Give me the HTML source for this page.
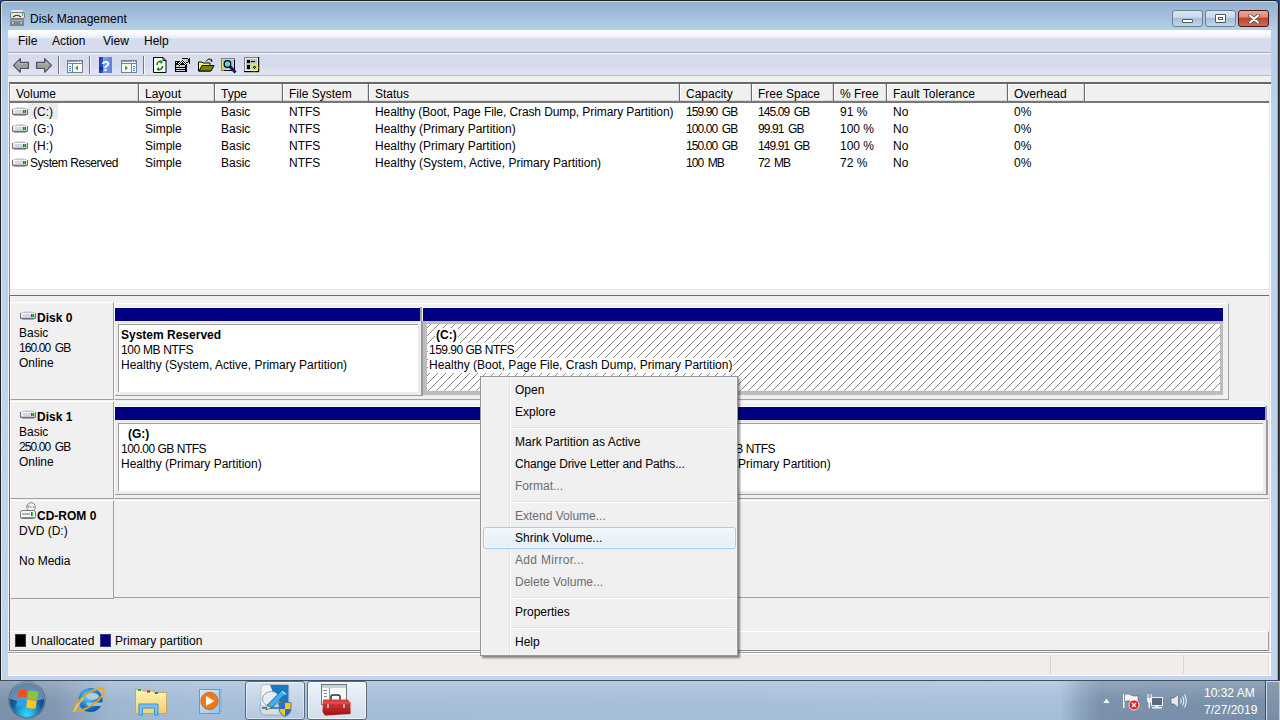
<!DOCTYPE html>
<html><head><meta charset="utf-8"><style>
*{margin:0;padding:0;box-sizing:border-box}
html,body{width:1280px;height:720px;overflow:hidden;background:#1652a8;font-family:"Liberation Sans",sans-serif;font-size:12px;color:#000;line-height:14px}
.a{position:absolute}
.t{position:absolute;white-space:nowrap}
.n{letter-spacing:-0.9px;word-spacing:2px}
.hd{position:absolute;top:0;height:19px;background:#f0f0f0;border-bottom:2px solid #777;border-right:1px solid #6d6d6d;box-shadow:inset -1px -1px 0 #d9d9d9,inset 1px 1px 0 #fff}
.hd span{position:absolute;left:6px;top:3px;white-space:nowrap}
</style></head><body>
<svg width="0" height="0" style="position:absolute"><defs>
<linearGradient id="dg" x1="0" y1="0" x2="0" y2="1"><stop offset="0" stop-color="#f4f4f4"/><stop offset=".45" stop-color="#d8dde3"/><stop offset="1" stop-color="#9aa0a6"/></linearGradient>
<pattern id="chk" width="2" height="2" patternUnits="userSpaceOnUse"><rect width="2" height="2" fill="#fff"/><rect width="1" height="1" fill="#000"/><rect x="1" y="1" width="1" height="1" fill="#000"/></pattern>
<pattern id="hatch" x="0" y="4" width="8" height="8" patternUnits="userSpaceOnUse"><rect x="0" y="7" width="1" height="1" fill="#8c8c8c"/><rect x="1" y="6" width="1" height="1" fill="#8c8c8c"/><rect x="2" y="5" width="1" height="1" fill="#8c8c8c"/><rect x="3" y="4" width="1" height="1" fill="#8c8c8c"/><rect x="4" y="3" width="1" height="1" fill="#8c8c8c"/><rect x="5" y="2" width="1" height="1" fill="#8c8c8c"/><rect x="6" y="1" width="1" height="1" fill="#8c8c8c"/><rect x="7" y="0" width="1" height="1" fill="#8c8c8c"/></pattern>
</defs></svg>
<div class="a" style="left:0px;top:0px;width:1279px;height:681px;background:linear-gradient(#93afd0 0px,#b6d0ea 30px,#bad2ea 120px,#c0d6ec 680px);border:1px solid #202020;border-radius:4px 4px 0 0;box-shadow:inset 1px 1px 0 rgba(255,255,255,.55)"></div>
<span class="t" style="left:30px;top:12px;">Disk Management</span>
<div class="a" style="left:1172px;top:10px;width:31px;height:17px;border:1px solid #6a7f98;border-radius:3px;background:linear-gradient(#dbe6f3 0,#c5d6ea 45%,#a8bdd6 50%,#c2d5ea 100%)"><div class="a" style="left:9px;top:8px;width:11px;height:4px;background:#fff;border:1px solid #505860;border-radius:1px"></div></div>
<div class="a" style="left:1205px;top:10px;width:31px;height:17px;border:1px solid #6a7f98;border-radius:3px;background:linear-gradient(#dbe6f3 0,#c5d6ea 45%,#a8bdd6 50%,#c2d5ea 100%)"><div class="a" style="left:9px;top:3px;width:11px;height:9px;background:#fff;border:1px solid #505860;border-radius:1px"><div class="a" style="left:2px;top:2px;width:5px;height:3px;border:1px solid #505860"></div></div></div>
<div class="a" style="left:1238px;top:10px;width:31px;height:17px;border:1px solid #4b1516;border-radius:3px;background:linear-gradient(#eaa99a 0,#dd8a76 40%,#c0432a 50%,#d26b55 100%)"><svg class="a" style="left:9px;top:3px" width="12" height="10" viewBox="0 0 12 10"><path d="M2 1.5 L10 8.5 M10 1.5 L2 8.5" stroke="#4a4a4a" stroke-width="3.6" stroke-linecap="round"/><path d="M2 1.5 L10 8.5 M10 1.5 L2 8.5" stroke="#fff" stroke-width="2.2" stroke-linecap="round"/></svg></div>
<div class="a" style="left:8px;top:30px;width:1263px;height:646px;background:#f0f0f0"></div>
<div class="a" style="left:8px;top:30px;width:1263px;height:23px;background:linear-gradient(#ffffff 0,#f4f6fb 5px,#e6eaf4 8px,#d6dcee 9px,#d6dcee 22px);border-bottom:1px solid #a4a8b0"></div>
<span class="t" style="left:18px;top:34px;">File</span>
<span class="t" style="left:52px;top:34px;">Action</span>
<span class="t" style="left:103px;top:34px;">View</span>
<span class="t" style="left:144px;top:34px;">Help</span>
<div class="a" style="left:8px;top:53px;width:1263px;height:23px;background:linear-gradient(#fafbfe 0,#fafbfe 1px,#d6dcee 1px,#d6dcee 15px,#dce2f2 16px,#dde3f3 22px);border-bottom:1px solid #b4bccf"></div>
<svg class="a" style="left:0;top:0" width="270" height="80" viewBox="0 0 270 80" shape-rendering="geometricPrecision">
<defs>
<linearGradient id="arr" x1="0" y1="0" x2="0" y2="1"><stop offset="0" stop-color="#e6e6e6"/><stop offset=".5" stop-color="#9b9b9b"/><stop offset="1" stop-color="#c9c9c9"/></linearGradient>
<linearGradient id="hlp" x1="0" y1="0" x2="1" y2="0"><stop offset="0" stop-color="#1c3da8"/><stop offset=".3" stop-color="#2c52c0"/><stop offset=".31" stop-color="#7fa2e8"/><stop offset="1" stop-color="#5c80dc"/></linearGradient>
</defs>
<path d="M13.5 65.4 L20.3 58.6 L20.3 62.4 L28.4 62.4 L28.4 68.4 L20.3 68.4 L20.3 72.2 Z" fill="url(#arr)" stroke="#555" stroke-width="1.3" stroke-linejoin="round"/>
<path d="M51.5 65.4 L44.7 58.6 L44.7 62.4 L36.6 62.4 L36.6 68.4 L44.7 68.4 L44.7 72.2 Z" fill="url(#arr)" stroke="#555" stroke-width="1.3" stroke-linejoin="round"/>
<rect x="58" y="56" width="1" height="18" fill="#6f7680"/><rect x="59" y="56" width="1" height="18" fill="#f4f6fb"/>
<rect x="89" y="56" width="1" height="18" fill="#6f7680"/><rect x="90" y="56" width="1" height="18" fill="#f4f6fb"/>
<rect x="143" y="56" width="1" height="18" fill="#6f7680"/><rect x="144" y="56" width="1" height="18" fill="#f4f6fb"/>
<!-- tree icon -->
<rect x="67.5" y="60.5" width="15" height="12" fill="#f6f6f6" stroke="#7b8089"/>
<rect x="68" y="61" width="10" height="1" fill="#9aa0a8"/><rect x="79" y="61" width="1" height="1" fill="#7b8089"/><rect x="81" y="61" width="1" height="1" fill="#7b8089"/>
<rect x="68" y="63" width="14" height="1" fill="#7b8089"/>
<rect x="72" y="64" width="1" height="8" fill="#7b8089"/>
<rect x="69" y="66" width="2" height="1" fill="#3a88c8"/><rect x="69" y="68" width="2" height="1" fill="#3a88c8"/><rect x="69" y="70" width="2" height="1" fill="#3a88c8"/>
<path d="M75 68 L78 65.5 L78 70.5 Z" fill="#22b422"/>
<!-- help -->
<rect x="99" y="57" width="13" height="16" fill="url(#hlp)"/>
<rect x="99" y="67" width="4" height="3" fill="#162f80"/>
<text x="105.6" y="70.5" font-family="Liberation Sans" font-weight="bold" font-size="14" fill="#fff" text-anchor="middle">?</text>
<!-- action pane icon -->
<rect x="121.5" y="60.5" width="15" height="12" fill="#f6f6f6" stroke="#7b8089"/>
<rect x="122" y="61" width="10" height="1" fill="#9aa0a8"/><rect x="133" y="61" width="1" height="1" fill="#7b8089"/><rect x="135" y="61" width="1" height="1" fill="#7b8089"/>
<rect x="122" y="63" width="14" height="1" fill="#7b8089"/>
<rect x="131" y="64" width="1" height="8" fill="#7b8089"/>
<rect x="133" y="66" width="2" height="1" fill="#3a88c8"/><rect x="133" y="68" width="2" height="1" fill="#3a88c8"/><rect x="133" y="70" width="2" height="1" fill="#3a88c8"/>
<path d="M128 68 L125 65.5 L125 70.5 Z" fill="#22b422"/>
<!-- refresh page -->
<path d="M153.5 57.5 L163 57.5 L166 60.5 L166 72.5 L153.5 72.5 Z" fill="#fff" stroke="#000" stroke-width="1"/>
<path d="M163 57.5 L163 60.5 L166 60.5" fill="none" stroke="#000" stroke-width="1"/>
<path d="M157 65 A3.2 3.2 0 0 1 162 62" fill="none" stroke="#0a8a0a" stroke-width="1.6"/>
<path d="M160.5 60 L163 62.2 L160.5 64 Z" fill="#0a8a0a"/>
<path d="M162.5 66 A3.2 3.2 0 0 1 157.5 69" fill="none" stroke="#0a8a0a" stroke-width="1.6"/>
<path d="M159 67 L156.5 69 L159 71 Z" fill="#0a8a0a"/>
<!-- properties -->
<g shape-rendering="crispEdges">
<rect x="175" y="61" width="12" height="11" fill="#000"/>
<rect x="176" y="62" width="1" height="1" fill="#e0e0e0"/>
<rect x="176" y="65" width="9" height="2" fill="#c8c8c8"/>
<rect x="176" y="68" width="9" height="1" fill="#d8d8d8"/>
<rect x="176" y="70" width="9" height="1" fill="#d8d8d8"/>
<rect x="182" y="58" width="6" height="5" fill="#000"/>
<rect x="183" y="59" width="5" height="3" fill="#c8c8c8"/>
<rect x="188" y="59" width="1" height="3" fill="#000"/>
<rect x="189" y="58" width="1" height="6" fill="#1010c0"/>
<path d="M177 64 L182 59 L183 59 L187 64 L185 66 L182 63 L179 66 Z" fill="url(#chk)"/>
</g>
<!-- open folder -->
<path d="M198.5 62 L202 62 L203 63 L210 63 L210 71 L198.5 71 Z" fill="#ffff40" stroke="#000"/>
<path d="M199 71 L202 65.5 L214 65.5 L211 71 Z" fill="#808000" stroke="#000"/>
<path d="M206 61.5 Q209 57 212 60.5" fill="none" stroke="#000" stroke-width="1"/>
<path d="M211 59 L213 61.5 L210.5 61.5 Z" fill="#000"/>
<!-- search -->
<rect x="221.5" y="58.5" width="13" height="12" fill="#c0c0c0" stroke="#808080"/>
<rect x="222.5" y="59.5" width="11" height="10" fill="none" stroke="#ffff00" stroke-dasharray="1 1"/>
<rect x="224" y="70" width="11" height="1" fill="#000"/><rect x="234" y="60" width="1" height="10" fill="#000"/>
<circle cx="227.5" cy="64" r="3.3" fill="#40e0f0" stroke="#000" stroke-width="1.2"/>
<path d="M230 66.5 L235.5 72.5" stroke="#000" stroke-width="2.6"/>
<path d="M230.5 67 L235 72" stroke="#1a1ae0" stroke-width="1.3"/>
<!-- settings -->
<rect x="244.5" y="57.5" width="14" height="14" fill="#f0f0f0" stroke="#808080"/>
<rect x="244" y="71" width="15" height="1.2" fill="#000"/><rect x="258" y="57" width="1.2" height="15" fill="#000"/>
<rect x="246" y="59" width="11" height="11" fill="#c0c0c0"/>
<rect x="247" y="60" width="3" height="3" fill="#000"/><rect x="251" y="61" width="4" height="1" fill="#000"/>
<rect x="247" y="65" width="3" height="4" fill="#000"/>
<g transform="translate(254.5 67.5)"><circle r="3.2" fill="none" stroke="#ffff00" stroke-width="1.6" stroke-dasharray="1.5 1"/><circle r="1.4" fill="#000"/></g>
<path d="M251 64 L258 71 M258 64 L251 71" stroke="#ffff00" stroke-width="1" stroke-dasharray="1 1"/>
</svg>
<svg class="a" style="left:10px;top:10px" width="15" height="16" viewBox="0 0 15 16">
<rect x="1" y="0" width="12" height="3" rx="1.5" fill="#e8e8e8"/>
<rect x="0.5" y="2.5" width="14" height="6" rx="1.5" fill="#eaeaea" stroke="#7b7b7b"/>
<path d="M3 7 Q7 3.5 11 7" fill="none" stroke="#333" stroke-width="1.2"/>
<rect x="12" y="3" width="1.2" height="3" fill="#3ccc3c"/>
<rect x="0" y="9" width="14" height="7" fill="#7d8590"/>
<rect x="1" y="10" width="12" height="1" fill="#aab2bc"/>
<rect x="2" y="12" width="1.5" height="1.5" fill="#e6e6e6"/><rect x="10.5" y="12" width="1.5" height="1.5" fill="#e6e6e6"/>
</svg>
<div class="a" style="left:9px;top:82px;width:1262px;height:209px;background:#fff;border-top:2px solid #696969;border-left:1px solid #8c8c8c">
<div class="hd" style="left:0px;width:129px;"><span>Volume</span></div>
<div class="hd" style="left:129px;width:76px;"><span>Layout</span></div>
<div class="hd" style="left:205px;width:68px;"><span>Type</span></div>
<div class="hd" style="left:273px;width:86px;"><span>File System</span></div>
<div class="hd" style="left:359px;width:311px;"><span>Status</span></div>
<div class="hd" style="left:670px;width:72px;"><span>Capacity</span></div>
<div class="hd" style="left:742px;width:82px;"><span>Free Space</span></div>
<div class="hd" style="left:824px;width:53px;"><span>% Free</span></div>
<div class="hd" style="left:877px;width:121px;"><span>Fault Tolerance</span></div>
<div class="hd" style="left:998px;width:77px;"><span>Overhead</span></div>
<div class="hd" style="left:1075px;width:186px;border-right:none;box-shadow:inset 1px 1px 0 #fff"><span></span></div>
<div class="a" style="left:0;top:18px;width:1262px;height:17px">
<div class="a" style="left:18px;top:1px;width:30px;height:16px;background:#ececec"></div>
<svg class="a" style="left:2px;top:5px" width="16" height="9" viewBox="0 0 16 9" shape-rendering="crispEdges"><rect x="4" y="0" width="8" height="1" fill="#dedede"/><rect x="2" y="1" width="12" height="1" fill="#c4c4c4"/><rect x="1" y="1" width="1" height="1" fill="#dcdcdc"/><rect x="14" y="1" width="1" height="1" fill="#dcdcdc"/><rect x="0" y="2" width="1" height="5" fill="#6c6c72"/><rect x="15" y="2" width="1" height="5" fill="#6c6c72"/><rect x="1" y="2" width="14" height="1" fill="#f6f6f6"/><rect x="1" y="3" width="2" height="3" fill="#eeeeee"/><rect x="3" y="3" width="8" height="3" fill="#d3d7e6"/><rect x="11" y="3" width="1" height="3" fill="#50507a"/><rect x="12" y="3" width="1" height="3" fill="#38c838"/><rect x="13" y="3" width="1" height="3" fill="#50507a"/><rect x="14" y="3" width="1" height="3" fill="#dcdcdc"/><rect x="1" y="6" width="14" height="1" fill="#c8c8c8"/><rect x="1" y="7" width="14" height="1" fill="#757579"/><rect x="0" y="7" width="1" height="1" fill="#9a9a9a"/><rect x="15" y="7" width="1" height="1" fill="#9a9a9a"/><rect x="2" y="8" width="12" height="1" fill="#a8a8a8"/></svg>
<span class="t" style="left:23px;top:3px;">(C:)</span>
<span class="t" style="left:135px;top:3px;">Simple</span>
<span class="t" style="left:211px;top:3px;">Basic</span>
<span class="t" style="left:279px;top:3px;">NTFS</span>
<span class="t" style="left:365px;top:3px;letter-spacing:-0.09px;">Healthy (Boot, Page File, Crash Dump, Primary Partition)</span>
<span class="t n" style="left:676px;top:3px;">159.90 GB</span>
<span class="t n" style="left:748px;top:3px;">145.09 GB</span>
<span class="t" style="left:830px;top:3px;">91 %</span>
<span class="t" style="left:883px;top:3px;">No</span>
<span class="t" style="left:1004px;top:3px;">0%</span>
</div>
<div class="a" style="left:0;top:35px;width:1262px;height:17px">
<svg class="a" style="left:2px;top:5px" width="16" height="9" viewBox="0 0 16 9" shape-rendering="crispEdges"><rect x="4" y="0" width="8" height="1" fill="#dedede"/><rect x="2" y="1" width="12" height="1" fill="#c4c4c4"/><rect x="1" y="1" width="1" height="1" fill="#dcdcdc"/><rect x="14" y="1" width="1" height="1" fill="#dcdcdc"/><rect x="0" y="2" width="1" height="5" fill="#6c6c72"/><rect x="15" y="2" width="1" height="5" fill="#6c6c72"/><rect x="1" y="2" width="14" height="1" fill="#f6f6f6"/><rect x="1" y="3" width="2" height="3" fill="#eeeeee"/><rect x="3" y="3" width="8" height="3" fill="#d3d7e6"/><rect x="11" y="3" width="1" height="3" fill="#50507a"/><rect x="12" y="3" width="1" height="3" fill="#38c838"/><rect x="13" y="3" width="1" height="3" fill="#50507a"/><rect x="14" y="3" width="1" height="3" fill="#dcdcdc"/><rect x="1" y="6" width="14" height="1" fill="#c8c8c8"/><rect x="1" y="7" width="14" height="1" fill="#757579"/><rect x="0" y="7" width="1" height="1" fill="#9a9a9a"/><rect x="15" y="7" width="1" height="1" fill="#9a9a9a"/><rect x="2" y="8" width="12" height="1" fill="#a8a8a8"/></svg>
<span class="t" style="left:23px;top:3px;">(G:)</span>
<span class="t" style="left:135px;top:3px;">Simple</span>
<span class="t" style="left:211px;top:3px;">Basic</span>
<span class="t" style="left:279px;top:3px;">NTFS</span>
<span class="t" style="left:365px;top:3px;">Healthy (Primary Partition)</span>
<span class="t n" style="left:676px;top:3px;">100.00 GB</span>
<span class="t n" style="left:748px;top:3px;">99.91 GB</span>
<span class="t" style="left:830px;top:3px;">100 %</span>
<span class="t" style="left:883px;top:3px;">No</span>
<span class="t" style="left:1004px;top:3px;">0%</span>
</div>
<div class="a" style="left:0;top:52px;width:1262px;height:17px">
<svg class="a" style="left:2px;top:5px" width="16" height="9" viewBox="0 0 16 9" shape-rendering="crispEdges"><rect x="4" y="0" width="8" height="1" fill="#dedede"/><rect x="2" y="1" width="12" height="1" fill="#c4c4c4"/><rect x="1" y="1" width="1" height="1" fill="#dcdcdc"/><rect x="14" y="1" width="1" height="1" fill="#dcdcdc"/><rect x="0" y="2" width="1" height="5" fill="#6c6c72"/><rect x="15" y="2" width="1" height="5" fill="#6c6c72"/><rect x="1" y="2" width="14" height="1" fill="#f6f6f6"/><rect x="1" y="3" width="2" height="3" fill="#eeeeee"/><rect x="3" y="3" width="8" height="3" fill="#d3d7e6"/><rect x="11" y="3" width="1" height="3" fill="#50507a"/><rect x="12" y="3" width="1" height="3" fill="#38c838"/><rect x="13" y="3" width="1" height="3" fill="#50507a"/><rect x="14" y="3" width="1" height="3" fill="#dcdcdc"/><rect x="1" y="6" width="14" height="1" fill="#c8c8c8"/><rect x="1" y="7" width="14" height="1" fill="#757579"/><rect x="0" y="7" width="1" height="1" fill="#9a9a9a"/><rect x="15" y="7" width="1" height="1" fill="#9a9a9a"/><rect x="2" y="8" width="12" height="1" fill="#a8a8a8"/></svg>
<span class="t" style="left:23px;top:3px;">(H:)</span>
<span class="t" style="left:135px;top:3px;">Simple</span>
<span class="t" style="left:211px;top:3px;">Basic</span>
<span class="t" style="left:279px;top:3px;">NTFS</span>
<span class="t" style="left:365px;top:3px;">Healthy (Primary Partition)</span>
<span class="t n" style="left:676px;top:3px;">150.00 GB</span>
<span class="t n" style="left:748px;top:3px;">149.91 GB</span>
<span class="t" style="left:830px;top:3px;">100 %</span>
<span class="t" style="left:883px;top:3px;">No</span>
<span class="t" style="left:1004px;top:3px;">0%</span>
</div>
<div class="a" style="left:0;top:69px;width:1262px;height:17px">
<svg class="a" style="left:2px;top:5px" width="16" height="9" viewBox="0 0 16 9" shape-rendering="crispEdges"><rect x="4" y="0" width="8" height="1" fill="#dedede"/><rect x="2" y="1" width="12" height="1" fill="#c4c4c4"/><rect x="1" y="1" width="1" height="1" fill="#dcdcdc"/><rect x="14" y="1" width="1" height="1" fill="#dcdcdc"/><rect x="0" y="2" width="1" height="5" fill="#6c6c72"/><rect x="15" y="2" width="1" height="5" fill="#6c6c72"/><rect x="1" y="2" width="14" height="1" fill="#f6f6f6"/><rect x="1" y="3" width="2" height="3" fill="#eeeeee"/><rect x="3" y="3" width="8" height="3" fill="#d3d7e6"/><rect x="11" y="3" width="1" height="3" fill="#50507a"/><rect x="12" y="3" width="1" height="3" fill="#38c838"/><rect x="13" y="3" width="1" height="3" fill="#50507a"/><rect x="14" y="3" width="1" height="3" fill="#dcdcdc"/><rect x="1" y="6" width="14" height="1" fill="#c8c8c8"/><rect x="1" y="7" width="14" height="1" fill="#757579"/><rect x="0" y="7" width="1" height="1" fill="#9a9a9a"/><rect x="15" y="7" width="1" height="1" fill="#9a9a9a"/><rect x="2" y="8" width="12" height="1" fill="#a8a8a8"/></svg>
<span class="t" style="left:20px;top:3px;letter-spacing:-0.45px;">System Reserved</span>
<span class="t" style="left:135px;top:3px;">Simple</span>
<span class="t" style="left:211px;top:3px;">Basic</span>
<span class="t" style="left:279px;top:3px;">NTFS</span>
<span class="t" style="left:365px;top:3px;">Healthy (System, Active, Primary Partition)</span>
<span class="t n" style="left:676px;top:3px;">100 MB</span>
<span class="t n" style="left:748px;top:3px;">72 MB</span>
<span class="t" style="left:830px;top:3px;">72 %</span>
<span class="t" style="left:883px;top:3px;">No</span>
<span class="t" style="left:1004px;top:3px;">0%</span>
</div>
</div>
<div class="a" style="left:9px;top:295px;width:1262px;height:356px;background:#f0f0f0;border-top:1px solid #6d6d6d;border-left:1px solid #6d6d6d"></div>
<div class="a" style="left:10px;top:289px;width:1261px;height:1px;background:#e3e3e3"></div>
<div class="a" style="left:10px;top:290px;width:1261px;height:5px;background:#f2f2f2;border-top:1px solid #fafafa"></div>
<div class="a" style="left:9px;top:289px;width:1px;height:7px;background:#8c8c8c"></div>
<div class="a" style="left:10px;top:302px;width:104px;height:98px;border-top:1px solid #fff;border-left:1px solid #fbfbfb;border-right:1px solid #a0a0a0;border-bottom:1px solid #a0a0a0"></div>
<svg class="a" style="left:20px;top:311px" width="16" height="9" viewBox="0 0 16 9" shape-rendering="crispEdges"><rect x="4" y="0" width="8" height="1" fill="#dedede"/><rect x="2" y="1" width="12" height="1" fill="#c4c4c4"/><rect x="1" y="1" width="1" height="1" fill="#dcdcdc"/><rect x="14" y="1" width="1" height="1" fill="#dcdcdc"/><rect x="0" y="2" width="1" height="5" fill="#6c6c72"/><rect x="15" y="2" width="1" height="5" fill="#6c6c72"/><rect x="1" y="2" width="14" height="1" fill="#f6f6f6"/><rect x="1" y="3" width="2" height="3" fill="#eeeeee"/><rect x="3" y="3" width="8" height="3" fill="#d3d7e6"/><rect x="11" y="3" width="1" height="3" fill="#50507a"/><rect x="12" y="3" width="1" height="3" fill="#38c838"/><rect x="13" y="3" width="1" height="3" fill="#50507a"/><rect x="14" y="3" width="1" height="3" fill="#dcdcdc"/><rect x="1" y="6" width="14" height="1" fill="#c8c8c8"/><rect x="1" y="7" width="14" height="1" fill="#757579"/><rect x="0" y="7" width="1" height="1" fill="#9a9a9a"/><rect x="15" y="7" width="1" height="1" fill="#9a9a9a"/><rect x="2" y="8" width="12" height="1" fill="#a8a8a8"/></svg>
<span class="t" style="left:37px;top:311px;font-weight:bold">Disk 0</span>
<span class="t" style="left:19px;top:326px;">Basic</span>
<span class="t n" style="left:19px;top:341px;">160.00 GB</span>
<span class="t" style="left:19px;top:356px;">Online</span>
<div class="a" style="left:10px;top:401px;width:104px;height:98px;border-top:1px solid #fff;border-left:1px solid #fbfbfb;border-right:1px solid #a0a0a0;border-bottom:1px solid #a0a0a0"></div>
<svg class="a" style="left:20px;top:410px" width="16" height="9" viewBox="0 0 16 9" shape-rendering="crispEdges"><rect x="4" y="0" width="8" height="1" fill="#dedede"/><rect x="2" y="1" width="12" height="1" fill="#c4c4c4"/><rect x="1" y="1" width="1" height="1" fill="#dcdcdc"/><rect x="14" y="1" width="1" height="1" fill="#dcdcdc"/><rect x="0" y="2" width="1" height="5" fill="#6c6c72"/><rect x="15" y="2" width="1" height="5" fill="#6c6c72"/><rect x="1" y="2" width="14" height="1" fill="#f6f6f6"/><rect x="1" y="3" width="2" height="3" fill="#eeeeee"/><rect x="3" y="3" width="8" height="3" fill="#d3d7e6"/><rect x="11" y="3" width="1" height="3" fill="#50507a"/><rect x="12" y="3" width="1" height="3" fill="#38c838"/><rect x="13" y="3" width="1" height="3" fill="#50507a"/><rect x="14" y="3" width="1" height="3" fill="#dcdcdc"/><rect x="1" y="6" width="14" height="1" fill="#c8c8c8"/><rect x="1" y="7" width="14" height="1" fill="#757579"/><rect x="0" y="7" width="1" height="1" fill="#9a9a9a"/><rect x="15" y="7" width="1" height="1" fill="#9a9a9a"/><rect x="2" y="8" width="12" height="1" fill="#a8a8a8"/></svg>
<span class="t" style="left:37px;top:410px;font-weight:bold">Disk 1</span>
<span class="t" style="left:19px;top:425px;">Basic</span>
<span class="t n" style="left:19px;top:440px;">250.00 GB</span>
<span class="t" style="left:19px;top:455px;">Online</span>
<div class="a" style="left:10px;top:500px;width:104px;height:99px;border-top:1px solid #fff;border-left:1px solid #fbfbfb;border-right:1px solid #a0a0a0;border-bottom:1px solid #a0a0a0"></div>
<svg class="a" style="left:20px;top:502px" width="17" height="17" viewBox="0 0 17 17"><circle cx="11" cy="5" r="4.3" fill="#f2f2f2" stroke="#8a8a8a" stroke-width="1"/><circle cx="11" cy="5" r="1" fill="#c0c0c0"/><rect x="7.5" y="3.5" width="2" height="2" fill="#40d040"/><rect x="13" y="4" width="1.5" height="2" fill="#b0a0d0"/><rect x="13" y="1" width="1" height="1" fill="#e040e0"/><rect x="0.5" y="8.5" width="15" height="8" rx="2" fill="#f4f4f4" stroke="#77777c"/><rect x="2" y="11.5" width="8" height="1" fill="#707070"/><rect x="11" y="10" width="1" height="4" fill="#50507a"/><rect x="12" y="10" width="1" height="4" fill="#38c838"/><rect x="1" y="15" width="14" height="1" fill="#8a8a8a"/></svg>
<span class="t" style="left:37px;top:509px;font-weight:bold">CD-ROM 0</span>
<span class="t" style="left:19px;top:524px;">DVD (D:)</span>
<span class="t" style="left:19px;top:554px;">No Media</span>
<div class="a" style="left:114px;top:500px;width:1157px;height:98px;border-top:1px solid #fff;border-bottom:1px solid #a0a0a0"></div>
<div class="a" style="left:114px;top:303px;width:1115px;height:97px;border-top:1px solid #fff;border-left:1px solid #fff;border-right:1px solid #a0a0a0;border-bottom:1px solid #a0a0a0"></div>
<div class="a" style="left:115px;top:307px;width:305px;height:14px;background:#000080;border-top:1px solid #fff"></div>
<div class="a" style="left:420px;top:307px;width:2px;height:14px;background:#a4a4a4"></div>
<div class="a" style="left:420px;top:321px;width:1px;height:75px;background:#ececec"></div>
<div class="a" style="left:421px;top:321px;width:2px;height:75px;background:#9c9c9c"></div>
<div class="a" style="left:115px;top:321px;width:307px;height:75px;background:#ececec;border-right:1px solid #9a9a9a;border-bottom:1px solid #9a9a9a"></div>
<div class="a" style="left:118px;top:324px;width:300px;height:68px;background:#fff;border-top:1px solid #a0a0a0;border-left:1px solid #a0a0a0"></div>
<span class="t" style="left:121px;top:328px;font-weight:bold;">System Reserved</span>
<span class="t" style="left:121px;top:343px;letter-spacing:-0.36px;">100 MB NTFS</span>
<span class="t" style="left:121px;top:358px;">Healthy (System, Active, Primary Partition)</span>
<div class="a" style="left:423px;top:307px;width:800px;height:14px;background:#000080;border-top:1px solid #fff"></div>
<div class="a" style="left:423px;top:321px;width:800px;height:74px;background:#bdbdbd"></div>
<svg class="a" style="left:427px;top:324px" width="793" height="67"><rect width="100%" height="100%" fill="#fff"/><rect width="100%" height="100%" fill="url(#hatch)"/></svg>
<span class="t" style="left:435px;top:328px;font-weight:bold;background:#fff;line-height:15px;padding:0 1px 0 1px;">(C:)</span>
<span class="t" style="left:428px;top:343px;background:#fff;line-height:15px;padding:0 1px 0 1px;letter-spacing:-0.5px;">159.90 GB NTFS</span>
<span class="t" style="left:428px;top:358px;background:#fff;line-height:15px;padding:0 1px 0 1px;">Healthy (Boot, Page File, Crash Dump, Primary Partition)</span>
<div class="a" style="left:114px;top:402px;width:1157px;height:97px;border-top:1px solid #fff;border-left:1px solid #fff;border-right:1px solid #a0a0a0;border-bottom:1px solid #a0a0a0"></div>
<div class="a" style="left:115px;top:406px;width:566px;height:14px;background:#000080;border-top:1px solid #fff"></div>
<div class="a" style="left:681px;top:406px;width:2px;height:14px;background:#a4a4a4"></div>
<div class="a" style="left:681px;top:420px;width:1px;height:75px;background:#ececec"></div>
<div class="a" style="left:682px;top:420px;width:2px;height:75px;background:#9c9c9c"></div>
<div class="a" style="left:115px;top:420px;width:568px;height:75px;background:#ececec;border-right:1px solid #9a9a9a;border-bottom:1px solid #9a9a9a"></div>
<div class="a" style="left:118px;top:423px;width:561px;height:68px;background:#fff;border-top:1px solid #a0a0a0;border-left:1px solid #a0a0a0"></div>
<span class="t" style="left:128px;top:427px;font-weight:bold;">(G:)</span>
<span class="t" style="left:121px;top:442px;letter-spacing:-0.5px;">100.00 GB NTFS</span>
<span class="t" style="left:121px;top:457px;">Healthy (Primary Partition)</span>
<div class="a" style="left:684px;top:406px;width:581px;height:14px;background:#000080;border-top:1px solid #fff"></div>
<div class="a" style="left:1265px;top:406px;width:2px;height:14px;background:#a4a4a4"></div>
<div class="a" style="left:1265px;top:420px;width:1px;height:75px;background:#ececec"></div>
<div class="a" style="left:1266px;top:420px;width:2px;height:75px;background:#9c9c9c"></div>
<div class="a" style="left:684px;top:420px;width:583px;height:75px;background:#ececec;border-right:1px solid #9a9a9a;border-bottom:1px solid #9a9a9a"></div>
<div class="a" style="left:687px;top:423px;width:576px;height:68px;background:#fff;border-top:1px solid #a0a0a0;border-left:1px solid #a0a0a0"></div>
<span class="t" style="left:697px;top:427px;font-weight:bold;">(H:)</span>
<span class="t" style="left:690px;top:442px;letter-spacing:-0.5px;">150.00 GB NTFS</span>
<span class="t" style="left:690px;top:457px;">Healthy (Primary Partition)</span>
<div class="a" style="left:10px;top:631px;width:1259px;height:20px;border-top:1px solid #fff;border-right:1px solid #a0a0a0;border-bottom:1px solid #8a8a8a"></div>
<div class="a" style="left:15px;top:634px;width:11px;height:13px;background:#000;border:1px solid #3a3a3a"></div>
<span class="t" style="left:31px;top:634px;">Unallocated</span>
<div class="a" style="left:100px;top:634px;width:11px;height:13px;background:#000080;border:1px solid #3a3a7a"></div>
<span class="t" style="left:115px;top:634px;">Primary partition</span>
<div class="a" style="left:1269px;top:84px;width:1px;height:567px;background:#e3e3e3"></div>
<div class="a" style="left:1270px;top:84px;width:1px;height:592px;background:#fff"></div>
<div class="a" style="left:1277px;top:8px;width:1px;height:672px;background:#58c8f0"></div>
<div class="a" style="left:8px;top:652px;width:1263px;height:1px;background:#a0a0a0"></div>
<div class="a" style="left:8px;top:653px;width:1263px;height:23px;background:#f0edeb;border-top:1px solid #fff"></div>
<div class="a" style="left:1050px;top:655px;width:1px;height:19px;background:#d8d4d0"></div>
<div class="a" style="left:1183px;top:655px;width:1px;height:19px;background:#d8d4d0"></div>
<div class="a" style="left:1268px;top:655px;width:1px;height:20px;background:#dcd8d4"></div>
<div class="a" style="left:1269px;top:653px;width:2px;height:23px;background:#fff"></div>
<div class="a" style="left:8px;top:675px;width:1263px;height:1px;background:#fff"></div>
<div class="a" style="left:0px;top:680px;width:1280px;height:40px;background:linear-gradient(90deg,#7d92ab 0px,#8499b2 55px,#a0b7d1 110px,#a7bfd9 200px,#a9c1db 1060px,#8ea6c0 1080px,#7c93ae 1100px,#7a90aa 1280px);border-top:1px solid #3f4f60"></div>
<div class="a" style="left:0px;top:681px;width:1280px;height:39px;background:linear-gradient(rgba(255,255,255,.18),rgba(255,255,255,0) 50%,rgba(0,0,0,.02))"></div>
<div class="a" style="left:245px;top:681px;width:60px;height:39px;border:1px solid #5a6b80;border-radius:3px;background:linear-gradient(#d6e2f0,#c2d4e8 50%,#b4c8de);box-shadow:inset 0 0 0 1px rgba(255,255,255,.45)"></div>
<div class="a" style="left:307px;top:681px;width:60px;height:39px;border:1px solid #5a6b80;border-radius:3px;background:linear-gradient(#eef3f9,#dfe8f3 50%,#d2dfee);box-shadow:inset 0 0 0 1px rgba(255,255,255,.6)"></div>
<div class="a" style="left:1265px;top:681px;width:15px;height:39px;background:linear-gradient(#8a9ab0,#7a8ca4);border-left:1px solid #3e4c5c;box-shadow:inset 1px 1px 0 #d0d8e0,inset -1px 0 0 #c0cad6"></div>
<span class="t" style="left:1204px;top:686px;color:#fff">10:32 AM</span>
<span class="t" style="left:1204px;top:703px;color:#fff">7/27/2019</span>
<svg class="a" style="left:0;top:680px" width="1280" height="40" viewBox="0 680 1280 40">
<defs>
<radialGradient id="orbG" cx=".5" cy=".6" r=".6"><stop offset="0" stop-color="#2f8ad0"/><stop offset=".6" stop-color="#135c9c"/><stop offset="1" stop-color="#0b3a6c"/></radialGradient>
<radialGradient id="orbB" cx=".5" cy=".95" r=".5"><stop offset="0" stop-color="#30e0ff"/><stop offset="1" stop-color="#30e0ff" stop-opacity="0"/></radialGradient>
<linearGradient id="orbTop" x1="0" y1="0" x2="0" y2="1"><stop offset="0" stop-color="#fff" stop-opacity=".55"/><stop offset="1" stop-color="#fff" stop-opacity=".05"/></linearGradient>
<radialGradient id="ieG" cx=".4" cy=".35" r=".7"><stop offset="0" stop-color="#7fd8ff"/><stop offset=".5" stop-color="#1a8ee0"/><stop offset="1" stop-color="#0a4aa0"/></radialGradient>
<linearGradient id="fold" x1="0" y1="0" x2="0" y2="1"><stop offset="0" stop-color="#fff4b8"/><stop offset="1" stop-color="#f0d070"/></linearGradient>
<linearGradient id="wmp" x1="0" y1="0" x2="1" y2="1"><stop offset="0" stop-color="#d8ecfa"/><stop offset="1" stop-color="#8ec4ec"/></linearGradient>
<linearGradient id="tbox" x1="0" y1="0" x2="0" y2="1"><stop offset="0" stop-color="#e04040"/><stop offset="1" stop-color="#a01010"/></linearGradient>
<linearGradient id="dsk" x1="0" y1="0" x2="0" y2="1"><stop offset="0" stop-color="#f0f4f8"/><stop offset="1" stop-color="#b8c4d0"/></linearGradient>
</defs>
<!-- start orb -->
<circle cx="27" cy="700" r="18.5" fill="#0d3058" fill-opacity=".75"/>
<circle cx="27" cy="700" r="17.6" fill="url(#orbG)"/>
<circle cx="27" cy="700" r="17" fill="url(#orbB)"/>
<path d="M10 699 A17 17 0 0 1 44 699 Q27 704 10 699 Z" fill="#c8d6e4" fill-opacity=".45"/>
<circle cx="27" cy="700" r="17.6" fill="none" stroke="#d8e4f0" stroke-opacity=".5" stroke-width=".8"/>
<path d="M18.5 690.5 Q22.5 688.5 27.5 690 L26.5 698 Q22 696.5 17.5 698.5 Z" fill="#f0501c"/>
<path d="M28.5 690.5 Q33 692 38.5 691.5 L37 699.5 Q32.5 700 27.5 698.5 Z" fill="#8cc43c"/>
<path d="M17.3 699.5 Q21.5 697.5 26.3 699 L25.2 707 Q20.5 705.5 16.2 707.5 Z" fill="#2aa2ea"/>
<path d="M27.3 699.5 Q32 701 36.8 700.5 L35.5 708.5 Q31 709 26.2 707.5 Z" fill="#ffc41e"/>
<!-- IE -->
<circle cx="90.5" cy="700" r="12" fill="url(#ieG)"/>
<ellipse cx="92.5" cy="696.3" rx="6.3" ry="3.4" fill="#b8cce0"/>
<path d="M86 702.6 L102.6 702.6 L101.6 706 L88 706 Q86 704.5 86 702.6 Z" fill="#a4bcd6"/>
<ellipse cx="89.5" cy="699.5" rx="17.5" ry="6" transform="rotate(-36 89.5 699.5)" fill="none" stroke="#f2a414" stroke-width="1.8"/>
<path d="M74 712 Q76 706 84 698" fill="none" stroke="#f8e070" stroke-width="1.5" stroke-opacity=".8"/>
<!-- explorer -->
<path d="M135.5 689.5 L142 689.5 L143 691 L153 691 L154 692.5 L166.5 692.5 L166.5 713.5 L135.5 713.5 Z" fill="url(#fold)" stroke="#c8a860"/>
<rect x="138" y="689" width="3" height="2" fill="#20b020"/><rect x="147" y="690.5" width="3" height="2" fill="#d02020"/><rect x="155" y="692" width="3" height="2" fill="#2080e0"/>
<path d="M139 704 L158 704 L158 715 L154.5 715 L154.5 708 L142.5 708 L142.5 715 L139 715 Z" fill="#7cc0ec" stroke="#3a90d0"/>
<!-- media player -->
<rect x="203" y="689.5" width="18" height="22" fill="#bcdcf4" stroke="#6aa8d8"/>
<rect x="199.5" y="689.5" width="20" height="24" fill="url(#wmp)" stroke="#5aa0d8"/>
<circle cx="209.5" cy="701" r="8.6" fill="#f07818" stroke="#e06010"/>
<path d="M206 696 L214.5 701 L206 706 Z" fill="#fff"/>
<!-- disk mgmt (button 1) -->
<path d="M260 708 Q260 715 266 715 L284 715 Q290 715 290 708 L290 704 L260 704 Z" fill="#d8dee4" stroke="#a0aab4"/>
<rect x="262" y="707" width="26" height="2" fill="#3a8ad0"/>
<path d="M261 688 Q261 684.5 264 684.5 L286 684.5 Q289 684.5 289 688 L289 706 L261 706 Z" fill="#f2f5f8" stroke="#b8c0c8"/>
<path d="M270 685 L288.5 685 L288.5 705 L278 705 Z" fill="#1c78c0"/>
<ellipse cx="271" cy="699" rx="8.5" ry="7.5" fill="#e8ecf0" stroke="#9aa6b2"/>
<path d="M267.5 705 L282 690 L286 693.5 L271.5 708 Z" fill="#3ab4f0" stroke="#1c4e7a" stroke-width=".8"/>
<path d="M267.5 705 L271.5 708 L266 710 Z" fill="#f0e0b0" stroke="#404040" stroke-width=".6"/>
<path d="M282 691 L286 694.5" stroke="#a8e0ff" stroke-width="1.5"/>
<path d="M279 702.5 L291 702.5 L291 709 Q291 714 285 716.5 Q279 714 279 709 Z" fill="#2c6cd0" stroke="#6a7480" stroke-width=".8"/>
<path d="M285 703 L290.5 703 L290.5 709 L285 709 Z" fill="#f8c818"/>
<path d="M279.5 709 L285 709 L285 716 Q280 714 279.5 709 Z" fill="#f8c818"/>
<!-- toolbox (button 2) -->
<rect x="321.5" y="684.5" width="25" height="20" fill="#f8f8f8" stroke="#707880"/>
<rect x="322" y="685" width="24" height="3" fill="#c8ced6"/>
<rect x="323" y="690" width="4" height="1" fill="#808890"/><rect x="324" y="693" width="3" height="1" fill="#808890"/><rect x="324" y="696" width="3" height="1" fill="#808890"/>
<rect x="329" y="688" width="1" height="16" fill="#9098a0"/>
<path d="M331 700 L331 697 Q331 695 333 695 L338 695 Q340 695 340 697 L340 700" fill="none" stroke="#303030" stroke-width="1.5"/>
<path d="M323 699.5 L348 699.5 L350.5 703 L350.5 714 L325 715.5 L322.5 712 Z" fill="url(#tbox)"/>
<rect x="322.5" y="702" width="28" height="1.5" fill="#f06060" fill-opacity=".7"/>
<rect x="327" y="704" width="2" height="4" fill="#b0b0b0"/><rect x="343" y="704" width="2" height="4" fill="#b0b0b0"/>
<!-- tray -->
<path d="M1102.5 703.5 L1106.5 698 L1110.5 703.5 Z" fill="#f0f4f8" stroke="#6a7a8a" stroke-width=".6"/>
<rect x="1123" y="694" width="1.5" height="14" fill="#f8f8f8"/>
<path d="M1124.5 694.5 Q1129 693 1131 695 Q1134 697 1138 695.5 L1138 702 Q1134 703.5 1131 701.5 Q1129 700 1124.5 701.5 Z" fill="#f4f4f4" stroke="#606060" stroke-width=".6"/>
<circle cx="1134" cy="705" r="5" fill="#e02020" stroke="#fff" stroke-width=".8"/>
<path d="M1132 703 L1136 707 M1136 703 L1132 707" stroke="#fff" stroke-width="1.4"/>
<rect x="1147.5" y="694" width="1.2" height="6" fill="#f0f0f0"/><rect x="1150.5" y="694" width="1.2" height="6" fill="#f0f0f0"/>
<path d="M1147 698 L1152 698 L1152 701 L1150 703 L1150 708 L1148.5 708 L1148.5 703 L1147 701 Z" fill="#f0f0f0"/>
<rect x="1151.5" y="697.5" width="11" height="8" fill="#5a6a7a" stroke="#f0f0f0"/>
<rect x="1155" y="706" width="3.5" height="1.5" fill="#f0f0f0"/><rect x="1152" y="707" width="10" height="1.5" fill="#f0f0f0"/>
<path d="M1171 698 L1174 698 L1178.5 694 L1178.5 708 L1174 704 L1171 704 Z" fill="#e8e8e8" stroke="#4a5868" stroke-width=".6"/>
<path d="M1180.5 698.5 Q1182 701 1180.5 703.5 M1182.5 696.5 Q1185 701 1182.5 705.5 M1184.5 694.5 Q1188 701 1184.5 707.5" fill="none" stroke="#f0f0f0" stroke-width="1.1"/>
</svg>
<div class="a" style="left:480px;top:376px;width:258px;height:280px;background:#f0f0f0;border:1px solid #979797;box-shadow:2px 2px 2px rgba(0,0,0,.45)"></div>
<div class="a" style="left:481px;top:377px;width:256px;height:278px;border:1px solid #f6f6f6"></div>
<div class="a" style="left:509px;top:378px;width:1px;height:276px;background:#e2e3e3"></div>
<div class="a" style="left:510px;top:378px;width:1px;height:276px;background:#fff"></div>
<div class="a" style="left:483px;top:527px;width:253px;height:22px;border:1px solid #a8cbf1;border-radius:3px;background:linear-gradient(#f2f6fc,#e6eef9);box-shadow:inset 0 0 0 1px rgba(255,255,255,.6)"></div>
<span class="t" style="left:515px;top:383px;color:#000">Open</span>
<span class="t" style="left:515px;top:405px;color:#000">Explore</span>
<div class="a" style="left:511px;top:427px;width:224px;height:1px;background:#e0e0e0"></div>
<div class="a" style="left:511px;top:428px;width:224px;height:1px;background:#fff"></div>
<span class="t" style="left:515px;top:435px;color:#000">Mark Partition as Active</span>
<span class="t" style="left:515px;top:457px;letter-spacing:-0.16px;color:#000">Change Drive Letter and Paths...</span>
<span class="t" style="left:515px;top:479px;color:#6d6d6d">Format...</span>
<div class="a" style="left:511px;top:501px;width:224px;height:1px;background:#e0e0e0"></div>
<div class="a" style="left:511px;top:502px;width:224px;height:1px;background:#fff"></div>
<span class="t" style="left:515px;top:509px;color:#6d6d6d">Extend Volume...</span>
<span class="t" style="left:515px;top:531px;color:#000">Shrink Volume...</span>
<span class="t" style="left:515px;top:553px;letter-spacing:0.3px;color:#6d6d6d">Add Mirror...</span>
<span class="t" style="left:515px;top:575px;color:#6d6d6d">Delete Volume...</span>
<div class="a" style="left:511px;top:597px;width:224px;height:1px;background:#e0e0e0"></div>
<div class="a" style="left:511px;top:598px;width:224px;height:1px;background:#fff"></div>
<span class="t" style="left:515px;top:605px;color:#000">Properties</span>
<div class="a" style="left:511px;top:627px;width:224px;height:1px;background:#e0e0e0"></div>
<div class="a" style="left:511px;top:628px;width:224px;height:1px;background:#fff"></div>
<span class="t" style="left:515px;top:635px;color:#000">Help</span>
</body></html>
